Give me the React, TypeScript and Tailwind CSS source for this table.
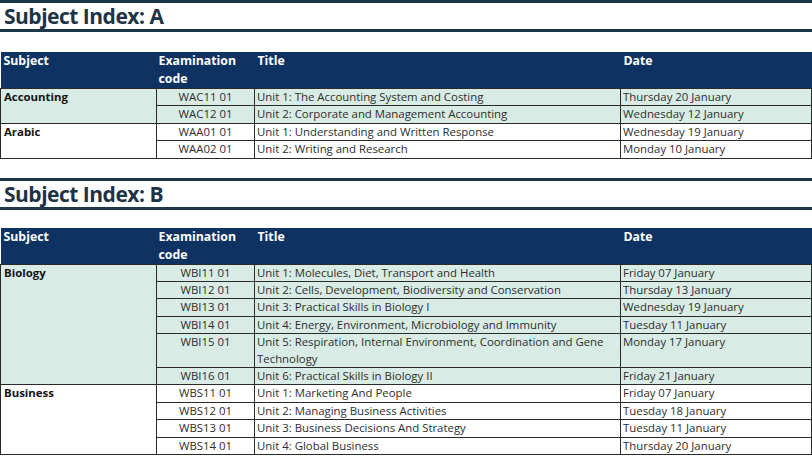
import React from "react";

type Row = { code: string; title: string; date: string };
type Subject = { name: string; shaded: boolean; rows: Row[] };

const indexA: Subject[] = [
  {
    name: "Accounting",
    shaded: true,
    rows: [
      { code: "WAC11 01", title: "Unit 1: The Accounting System and Costing", date: "Thursday 20 January" },
      { code: "WAC12 01", title: "Unit 2: Corporate and Management Accounting", date: "Wednesday 12 January" },
    ],
  },
  {
    name: "Arabic",
    shaded: false,
    rows: [
      { code: "WAA01 01", title: "Unit 1: Understanding and Written Response", date: "Wednesday 19 January" },
      { code: "WAA02 01", title: "Unit 2: Writing and Research", date: "Monday 10 January" },
    ],
  },
];

const indexB: Subject[] = [
  {
    name: "Biology",
    shaded: true,
    rows: [
      { code: "WBI11 01", title: "Unit 1: Molecules, Diet, Transport and Health", date: "Friday 07 January" },
      { code: "WBI12 01", title: "Unit 2: Cells, Development, Biodiversity and Conservation", date: "Thursday 13 January" },
      { code: "WBI13 01", title: "Unit 3: Practical Skills in Biology I", date: "Wednesday 19 January" },
      { code: "WBI14 01", title: "Unit 4: Energy, Environment, Microbiology and Immunity", date: "Tuesday 11 January" },
      { code: "WBI15 01", title: "Unit 5: Respiration, Internal Environment, Coordination and Gene Technology", date: "Monday 17 January" },
      { code: "WBI16 01", title: "Unit 6: Practical Skills in Biology II", date: "Friday 21 January" },
    ],
  },
  {
    name: "Business",
    shaded: false,
    rows: [
      { code: "WBS11 01", title: "Unit 1: Marketing And People", date: "Friday 07 January" },
      { code: "WBS12 01", title: "Unit 2: Managing Business Activities", date: "Tuesday 18 January" },
      { code: "WBS13 01", title: "Unit 3: Business Decisions And Strategy", date: "Tuesday 11 January" },
      { code: "WBS14 01", title: "Unit 4: Global Business", date: "Thursday 20 January" },
    ],
  },
];

const SectionTitle = ({ letter }: { letter: string }) => (
  <div>
    <div className="h-[3px] bg-[#1c3747]" />
    <h2 className="h-[26px] pl-[4px] text-[21px] leading-[26px] font-bold tracking-[-0.5px] text-[#1d3446]">
      Subject Index: {letter}
    </h2>
    <div className="h-[3px] bg-[#1c3747]" />
  </div>
);

const IndexTable = ({ subjects }: { subjects: Subject[] }) => (
  <table className="w-full border-collapse table-fixed text-[11.4px] leading-[16.4px] text-[#2e2e2e]">
    <colgroup>
      <col className="w-[156px]" />
      <col className="w-[98px]" />
      <col className="w-[366px]" />
      <col />
    </colgroup>
    <thead>
      <tr className="bg-[#0e3261] text-white text-[12.3px] leading-[18px] font-bold text-left align-top">
        <th className="pl-[3px] font-bold">Subject</th>
        <th className="pl-[2px] font-bold">
          Examination
          <br />
          code
        </th>
        <th className="pl-[3px] font-bold">Title</th>
        <th className="pl-[3px] font-bold">Date</th>
      </tr>
    </thead>
    <tbody>
      {subjects.map((s) =>
        s.rows.map((r, i) => (
          <tr key={r.code} className={`align-top ${s.shaded ? "bg-[#d8ebe4]" : "bg-white"}`}>
            {i === 0 && (
              <td
                rowSpan={s.rows.length}
                className="border border-[#2a2a2a] pl-[3px] font-bold text-[#141414]"
              >
                {s.name}
              </td>
            )}
            <td className="border border-[#2a2a2a] text-center">{r.code}</td>
            <td className="border border-[#2a2a2a] pl-[2px]">{r.title}</td>
            <td className="border border-[#2a2a2a] pl-[2px]">{r.date}</td>
          </tr>
        ))
      )}
    </tbody>
  </table>
);

export default function App() {
  return (
    <div
      className="w-[812px] h-[456px] overflow-hidden bg-white"
      style={{ fontFamily: '"Open Sans", "Noto Sans", sans-serif' }}
    >
      <SectionTitle letter="A" />
      <div className="mt-[20px]">
        <IndexTable subjects={indexA} />
      </div>
      <div className="mt-[19px]">
        <SectionTitle letter="B" />
      </div>
      <div className="mt-[18px]">
        <IndexTable subjects={indexB} />
      </div>
    </div>
  );
}
